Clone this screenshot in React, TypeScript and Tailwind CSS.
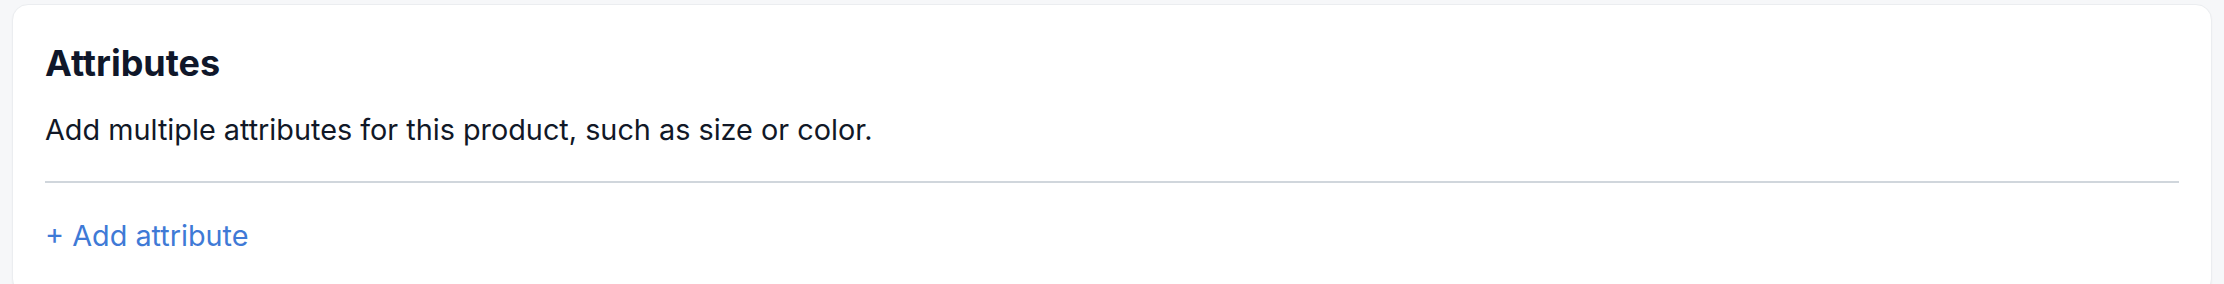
export default function App() {
  return (
    <div className="min-h-screen bg-[#f6f7f9] px-[12px] pt-[4px]" style={{ fontFamily: 'Inter, "Noto Sans", sans-serif' }}>
      <div className="rounded-[16px] border border-[#ebedf0] bg-white px-[32px] pt-[38px] pb-[40px] shadow-[0_1px_2px_rgba(0,0,0,0.04)]">
        <h2 className="text-[36px] leading-[40px] font-bold text-[#0f172a]">Attributes</h2>
        <p className="mt-[29px] text-[28.8px] leading-[36px] text-[#111827]">
          Add multiple attributes for this product, such as size or color.
        </p>
        <div className="mt-[33px] h-[2px] bg-[#d0d6dc]" />
        <button className="mt-[35px] block text-[28.8px] leading-[36px] text-[#3f7ad6]">+ Add attribute</button>
      </div>
    </div>
  );
}
